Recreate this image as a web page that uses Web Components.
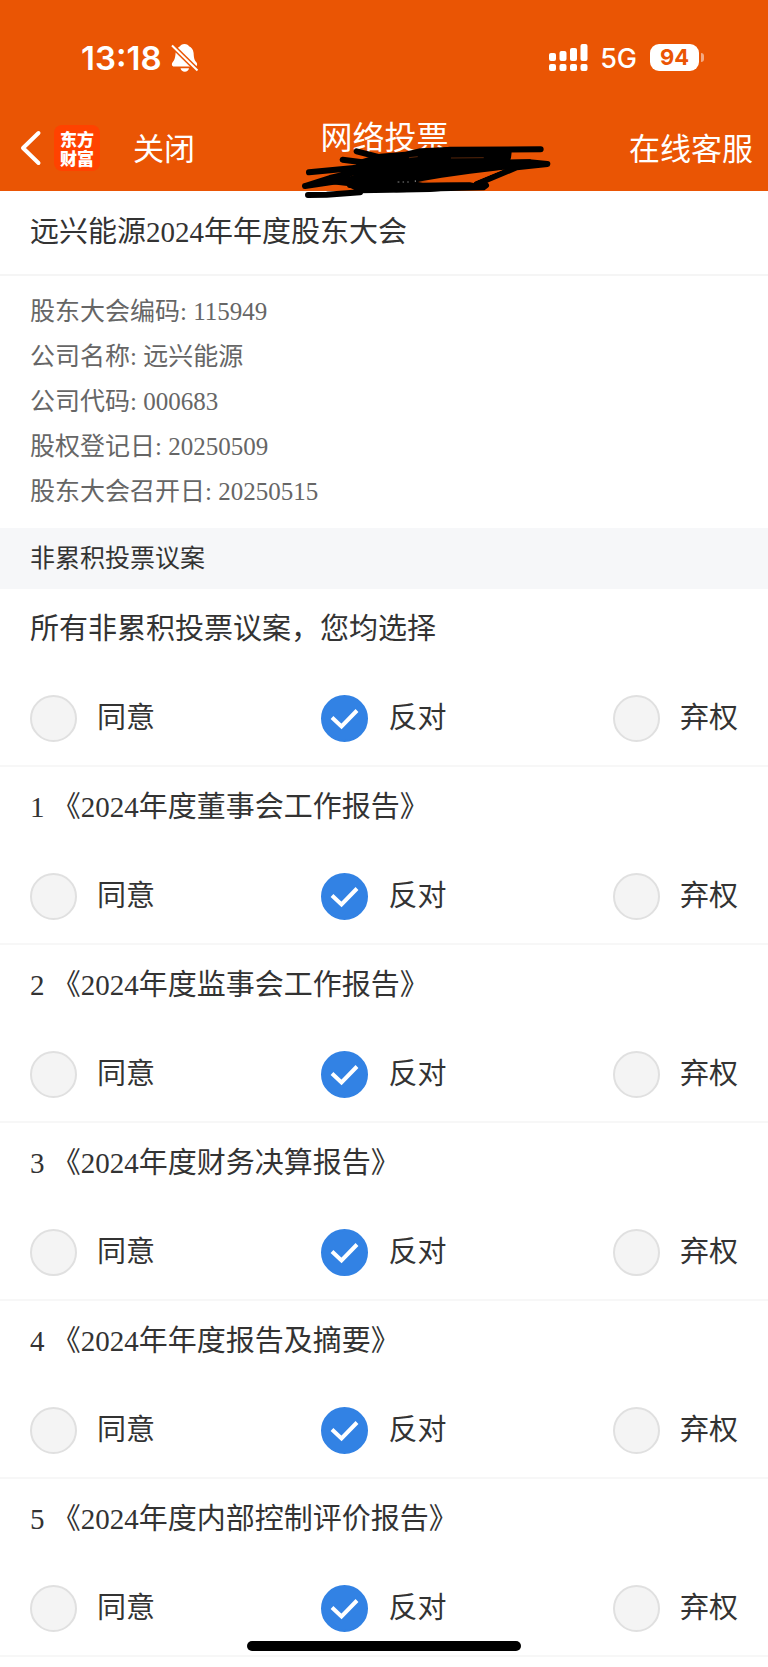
<!DOCTYPE html>
<html lang="zh-CN">
<head>
<meta charset="utf-8">
<meta name="viewport" content="width=device-width, initial-scale=1">
<title>网络投票</title>
<style>
  body {
    margin: 0;
    min-height: 100vh;
    background: #fff;
    color: #333;
    font-family: "Liberation Serif", "Noto Sans CJK SC", serif;
    font-size: 29px;
  }
</style>
</head>
<body>
<vote-page></vote-page>

<script>
const define = (name, html, setup) => {
  const template = document.createElement('template');
  template.innerHTML = html;
  customElements.define(name, class extends HTMLElement {
    constructor() {
      super();
      this.attachShadow({ mode: 'open' }).append(template.content.cloneNode(true));
    }
    connectedCallback() {
      if (setup) setup(this, this.shadowRoot);
    }
  });
};

/* Phone status bar: clock, muted bell, signal, network, battery */
define('status-bar', `
  <style>
    :host {
      display: flex;
      justify-content: space-between;
      align-items: center;
      height: 107px;
      box-sizing: border-box;
      padding: 8px 64px 0 81px;
      color: #fff;
      font-family: Inter, sans-serif;
    }
    div { display: flex; align-items: center; }
    .time { font-size: 33px; font-weight: 600; line-height: 40px; }
    .bell { margin-left: 9px; }
    .net { font-size: 27px; font-weight: 500; line-height: 32px; margin: 2px 13px 0 12px; }
    .level {
      width: 49px; height: 27px; border-radius: 9px;
      background: #fff; color: #ea5504;
      font-size: 22px; font-weight: 700; line-height: 27px; text-align: center;
    }
    .nub { width: 3px; height: 9px; margin-left: 2px; border-radius: 0 3px 3px 0; background: #f4a983; }
    svg { display: block; }
  </style>
  <div>
    <span class="time">13:18</span>
    <svg class="bell" width="28" height="30" viewBox="0 0 28 30" fill="#fff" aria-hidden="true">
      <path d="M13.500 1C11 1 9.500 2.300 9 3.300C7 4.200 5 6.500 4.600 10C4.200 15 3.500 17 1.500 19.500C.4 21 .8 23.500 3 23.500H24C26.300 23.500 26.600 21 25.500 19.500C23.300 17 22.900 15 22.600 10C22.200 6.500 20.500 4.200 18 3.300C17.500 2 16 1 13.500 1Z"/>
      <path d="M9.500 25.300H18C17.600 27.300 16 28.700 13.800 28.700C11.600 28.700 10 27.300 9.500 25.300Z"/>
      <path d="M0 1.500L27 28" stroke="#ea5504" stroke-width="5"/>
      <path d="M1 2.500L26.500 27.500" stroke="#fff" stroke-width="2"/>
    </svg>
  </div>
  <div>
    <svg width="39" height="28" viewBox="0 0 39 28" fill="#fff" aria-hidden="true">
      <rect x="0" y="9" width="7" height="8" rx="2"/><rect x="10.500" y="7" width="7" height="10" rx="2"/>
      <rect x="21" y="4" width="7" height="13" rx="2"/><rect x="31.500" y="0" width="7" height="17" rx="2"/>
      <rect x="0" y="20" width="7" height="7" rx="2"/><rect x="10.500" y="20" width="7" height="7" rx="2"/>
      <rect x="21" y="20" width="7" height="7" rx="2"/><rect x="31.500" y="20" width="7" height="7" rx="2"/>
    </svg>
    <span class="net">5G</span>
    <span class="level">94</span><span class="nub"></span>
  </div>
`);

define('brand-logo', `
  <style>
    :host {
      display: grid;
      place-content: center;
      width: 46px; height: 46px;
      border-radius: 8px;
      background: #ff4200;
      color: #fff;
      font: 900 17px/19px "Noto Sans CJK SC", sans-serif;
    }
    span { display: block; width: 34px; }
  </style>
  <span>东方财富</span>
`);

/* Pen strokes that cover the account line under the title */
define('pen-marks', `
  <style>
    :host { display: block; width: 270px; height: 95px; pointer-events: none; }
    svg { display: block; }
  </style>
  <svg width="270" height="95" viewBox="0 0 810 285" fill="none" stroke="#000" stroke-width="18" stroke-linecap="round" stroke-linejoin="round" aria-hidden="true">
    <path fill="#000" stroke="none" d="M215 148L270 131L345 125L390 115L480 111L660 126L655 150L722 148L724 172L650 178L540 198L455 207L384 218L540 216L590 230L420 246L300 248L210 250L172 228L120 222L205 190L160 195L190 175L205 155Z"/>
    <path d="M200 124L285 146M158 149L240 160M57 187L200 173M45 228L120 204L205 184M45 228L180 208M54 255L110 254L210 247M180 225L320 238L580 232L588 226M345 136L480 119L752 118M656 126L654 143M600 158L718 157L772 162L680 172L560 222"/>
    <path d="M358 143L382 140M484 144L580 143" stroke="#55250a" stroke-width="3"/>
    <path d="M384 215L455 203L540 191L640 179L548 217Z" fill="#ea5504" stroke="none"/>
    <path d="M324 216H327M339 216H341M353 216H355M376 212V215" stroke="#ccc" stroke-width="2"/>
  </svg>
`);

define('nav-bar', `
  <style>
    :host {
      display: grid;
      grid-template-columns: 1fr auto 1fr;
      align-items: center;
      height: 84px;
      box-sizing: border-box;
      padding: 0 15px 3px 16px;
      color: #fff;
      font-family: "Noto Sans CJK SC", sans-serif;
    }
    .left { display: flex; align-items: center; }
    button, a {
      padding: 0 0 2px; border: 0; background: none; color: inherit;
      font: inherit; font-size: 31px; line-height: 44px; text-decoration: none;
    }
    .back { display: flex; padding: 0 12px 0 4px; }
    .close { margin-left: 33px; }
    .title { position: relative; align-self: start; padding-top: 6px; }
    h1 { margin: 0; font-size: 32px; font-weight: 400; line-height: 44px; }
    pen-marks { position: absolute; left: -30px; top: 3px; }
    a { justify-self: end; }
  </style>
  <div class="left">
    <button class="back" aria-label="返回">
      <svg width="22" height="36" viewBox="0 0 22 36" fill="none" stroke="#fff" stroke-width="4" stroke-linecap="round" stroke-linejoin="round"><path d="M18.500 3L3 18L18.500 33"/></svg>
    </button>
    <brand-logo></brand-logo>
    <button class="close">关闭</button>
  </div>
  <div class="title"><h1>网络投票</h1><pen-marks></pen-marks></div>
  <a href="#service">在线客服</a>
`);

define('meeting-info', `
  <style>
    :host { display: block; }
    h2 {
      margin: 0; padding: 20px 30px;
      border-bottom: 2px solid #f5f5f5;
      font-size: 29px; font-weight: 400; line-height: 43px;
    }
    div {
      padding: 13px 30px 14px;
      color: #666; font-size: 25px; line-height: 45px;
    }
    ::slotted(p) { margin: 0; }
  </style>
  <h2><slot name="title"></slot></h2>
  <div><slot></slot></div>
`);

define('section-head', `
  <style>
    :host { display: block; padding: 8px 30px; background: #f6f7f9; }
    h3 { margin: 0; font-size: 25px; font-weight: 400; line-height: 45px; }
  </style>
  <h3><slot></slot></h3>
`);

define('vote-item', `
  <style>
    :host { display: block; padding: 18px 30px 23px; border-bottom: 2px solid #f7f7f7; }
    .name { margin: 0 0 44px; line-height: 44px; }
    .options { display: flex; justify-content: space-between; }
    label { display: flex; align-items: center; gap: 20px; height: 47px; }
    .mark { display: grid; }
    .mark > * { grid-area: 1 / 1; }
    .text { line-height: 43px; }
    input {
      appearance: none; margin: 0; box-sizing: border-box;
      width: 47px; height: 47px; border-radius: 50%;
      border: 2px solid #e0e0e0; background: #f4f4f4;
    }
    input:checked { border-color: #3282e4; background: #3282e4; }
    svg { display: none; pointer-events: none; }
    input:checked + svg { display: block; }
  </style>
  <p class="name" id="name"><slot></slot></p>
  <div class="options" role="radiogroup" aria-labelledby="name"></div>
`, (host, root) => {
  const box = root.querySelector('.options');
  if (box.children.length) return;
  box.innerHTML = ['同意', '反对', '弃权'].map((text, i) => `
    <label><span class="mark"><input type="radio" name="vote" value="${text}" ${i === 1 ? 'checked' : ''}>
      <svg width="47" height="47" viewBox="0 0 47 47" fill="none" stroke="#fff" stroke-width="4" aria-hidden="true"><path d="M11 22.500L20.500 31.500L36 15.500"/></svg></span><span class="text">${text}</span></label>`).join('');
});

define('home-indicator', `
  <style>
    :host {
      position: fixed; bottom: 16px; left: 0; right: 0;
      width: 274px; height: 10px; margin: 0 auto;
      border-radius: 5px; background: #000;
    }
  </style>
`);

define('vote-page', `
  <style>
    :host { display: block; }
    header { background: #ea5504; }
  </style>
  <header><status-bar></status-bar><nav-bar></nav-bar></header>
  <main>
    <meeting-info>
      <span slot="title">远兴能源2024年年度股东大会</span>
      <p>股东大会编码: 115949</p>
      <p>公司名称: 远兴能源</p>
      <p>公司代码: 000683</p>
      <p>股权登记日: 20250509</p>
      <p>股东大会召开日: 20250515</p>
    </meeting-info>
    <section-head>非累积投票议案</section-head>
    <vote-item>所有非累积投票议案，您均选择</vote-item>
    <vote-item>1 《2024年度董事会工作报告》</vote-item>
    <vote-item>2 《2024年度监事会工作报告》</vote-item>
    <vote-item>3 《2024年度财务决算报告》</vote-item>
    <vote-item>4 《2024年年度报告及摘要》</vote-item>
    <vote-item>5 《2024年度内部控制评价报告》</vote-item>
  </main>
  <home-indicator></home-indicator>
`);
</script>
</body>
</html>
